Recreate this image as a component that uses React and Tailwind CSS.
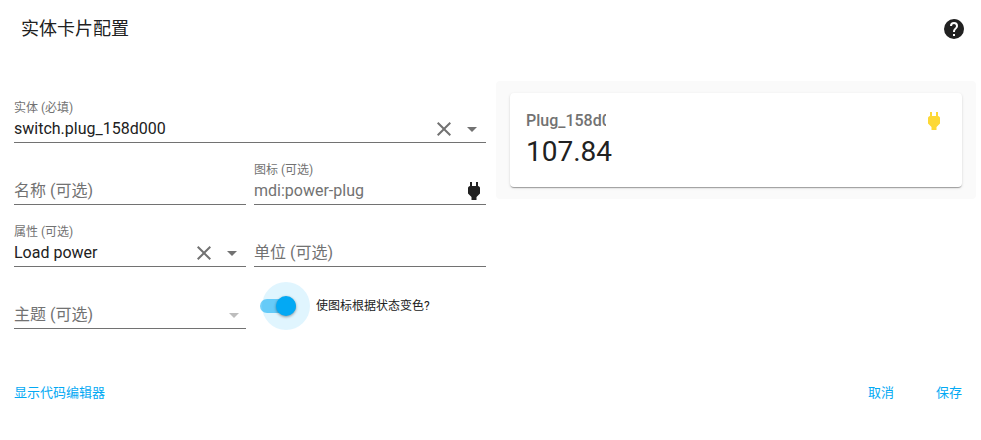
import React from "react";

const PLUG =
  "M16,7V3H14V7H10V3H8V7H8C7,7 6,8 6,9V14.5L9.5,18V21H14.5V18L18,14.5V9C18,8 17,7 16,7Z";
const CLOSE =
  "M19,6.41L17.59,5L12,10.59L6.41,5L5,6.41L10.59,12L5,17.59L6.41,19L12,13.41L17.59,19L19,17.59L13.41,12L19,6.41Z";
const MENU_DOWN = "M7,10L12,15L17,10H7Z";
const HELP =
  "M15.07,11.25L14.17,12.17C13.45,12.89 13,13.5 13,15H11V14.5C11,13.39 11.45,12.39 12.17,11.67L13.41,10.41C13.78,10.05 14,9.55 14,9C14,7.89 13.1,7 12,7A2,2 0 0,0 10,9H8A4,4 0 0,1 12,5A4,4 0 0,1 16,9C16,9.88 15.64,10.67 15.07,11.25M13,19H11V17H13M12,2A10,10 0 0,0 2,12A10,10 0 0,0 12,22A10,10 0 0,0 22,12C22,6.47 17.5,2 12,2Z";

function Icon({ path, className = "" }) {
  return (
    <svg viewBox="0 0 24 24" aria-hidden="true" className={`size-6 shrink-0 fill-current ${className}`}>
      <path d={path} />
    </svg>
  );
}

function Field({ id, label, floating = false, className = "", children }) {
  return (
    <div className={`pb-2 ${className}`}>
      <div className="h-7 pt-2 text-xs leading-[22px] text-[#727272]">
        {floating && <label htmlFor={id}>{label}</label>}
      </div>
      <div className="flex h-[26px] items-start border-b border-[#727272]">{children}</div>
    </div>
  );
}

const inputStyle =
  "h-6 min-w-0 flex-1 bg-transparent p-0 text-base leading-6 outline-none placeholder:text-[#727272] placeholder:opacity-100";

function ComboControls({ name }) {
  return (
    <div className="flex gap-1 pr-[2px] text-[#727272]">
      <button type="button" aria-label={`清除${name}`}>
        <Icon path={CLOSE} />
      </button>
      <button type="button" aria-label={`展开${name}`}>
        <Icon path={MENU_DOWN} />
      </button>
    </div>
  );
}

function ConfigForm() {
  return (
    <form className="grid grid-cols-2 gap-x-2 px-1 pt-2">
      <Field id="entity" label="实体 (必填)" floating className="col-span-2">
        <input id="entity" className={inputStyle} defaultValue="switch.plug_158d000" spellCheck={false} />
        <ComboControls name="实体" />
      </Field>
      <Field>
        <input className={inputStyle} placeholder="名称 (可选)" aria-label="名称 (可选)" />
      </Field>
      <Field id="icon" label="图标 (可选)" floating>
        <input id="icon" className={inputStyle} placeholder="mdi:power-plug" />
        <Icon path={PLUG} />
      </Field>
      <Field id="attribute" label="属性 (可选)" floating>
        <input id="attribute" className={inputStyle} defaultValue="Load power" />
        <ComboControls name="属性" />
      </Field>
      <Field>
        <input className={inputStyle} placeholder="单位 (可选)" aria-label="单位 (可选)" />
      </Field>
      <Field>
        <select
          aria-label="主题 (可选)"
          className="h-6 min-w-0 flex-1 appearance-none bg-transparent p-0 text-base leading-6 text-[#727272] outline-none"
        >
          <option>主题 (可选)</option>
        </select>
        <Icon path={MENU_DOWN} className="text-[#bdbdbd]" />
      </Field>
      <div className="flex items-center gap-5 pl-[6px]">
        <input
          id="state-color"
          type="checkbox"
          role="switch"
          defaultChecked
          className="relative h-[14px] w-9 shrink-0 appearance-none rounded-full bg-[#03a9f4]/55 outline-none before:absolute before:-top-[17px] before:left-[2px] before:size-12 before:rounded-full before:bg-[#03a9f4]/12 after:absolute after:-top-[3px] after:right-0 after:size-5 after:rounded-full after:bg-[#03a9f4] after:shadow-[0_1px_3px_rgba(0,0,0,0.4)]"
        />
        <label htmlFor="state-color" className="text-xs leading-5">
          使图标根据状态变色?
        </label>
      </div>
    </form>
  );
}

function Preview() {
  return (
    <section className="rounded bg-[#fafafa] px-[14px] py-3">
      <div className="rounded bg-white px-4 pt-4 pb-5 shadow-[0_2px_1px_-1px_rgba(0,0,0,0.2),0_1px_1px_0_rgba(0,0,0,0.14),0_1px_3px_0_rgba(0,0,0,0.12)]">
        <div className="flex justify-between">
          <div className="w-20 overflow-hidden font-medium whitespace-nowrap text-[#727272]">Plug_158d000</div>
          <Icon path={PLUG} className="text-[#fdd835]" />
        </div>
        <div className="pt-1 text-[28px] leading-[30px]">107.84</div>
      </div>
    </section>
  );
}

const actionStyle = "text-[13px] leading-5 text-[#03a9f4]";

export default function App() {
  return (
    <main className="min-h-screen bg-white font-[Roboto,'Noto_Sans_CJK_SC',sans-serif] text-[#212121]">
      <header className="flex items-center justify-between pt-4 pr-[15px] pl-[21px]">
        <h1 className="text-lg leading-[26px]">实体卡片配置</h1>
        <button type="button" aria-label="帮助">
          <Icon path={HELP} />
        </button>
      </header>
      <div className="grid grid-cols-2 items-start gap-[6px] pt-[39px] pr-[5px] pl-[10px]">
        <ConfigForm />
        <Preview />
      </div>
      <footer className="flex justify-between pt-[46px] pr-[19px] pl-[14px]">
        <button type="button" className={actionStyle}>显示代码编辑器</button>
        <div className="flex gap-[42px]">
          <button type="button" className={actionStyle}>取消</button>
          <button type="button" className={actionStyle}>保存</button>
        </div>
      </footer>
    </main>
  );
}
